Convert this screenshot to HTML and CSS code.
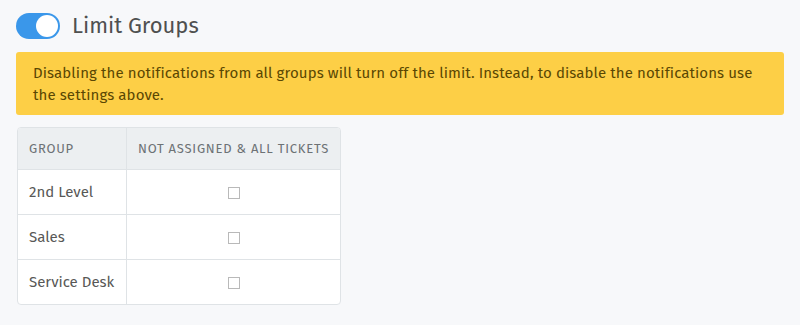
FILE: index.html
```html
<!DOCTYPE html>
<html>
<head>
<meta charset="utf-8">
<link rel="stylesheet" href="styles.css">
</head>
<body>
<div class="page">
  <div class="heading">
    <span class="toggle"><span class="knob"></span></span>
    <h2 class="title">Limit Groups</h2>
  </div>
  <div class="alert">Disabling the notifications from all groups will turn off the limit. Instead, to disable the notifications use the settings above.</div>
  <table class="groups">
    <thead>
      <tr><th class="col-group">Group</th><th class="col-check">Not Assigned &amp; All Tickets</th></tr>
    </thead>
    <tbody>
      <tr><td>2nd Level</td><td class="center"><span class="checkbox"></span></td></tr>
      <tr><td>Sales</td><td class="center"><span class="checkbox"></span></td></tr>
      <tr><td>Service Desk</td><td class="center"><span class="checkbox"></span></td></tr>
    </tbody>
  </table>
</div>
</body>
</html>
```

FILE: styles.css
```css
html, body {
  margin: 0;
  padding: 0;
  background: #f7f8fa;
}
body {
  font-family: "Fira Sans", "Open Sans", "Noto Sans", sans-serif;
  color: #585856;
}
.page {
  padding: 13px 16px 0 16px;
}
.heading {
  display: flex;
  align-items: center;
  gap: 12px;
  height: 26px;
}
.toggle {
  position: relative;
  display: block;
  width: 44px;
  height: 26px;
  border-radius: 13px;
  background: #3a97ea;
  box-sizing: border-box;
}
.knob {
  position: absolute;
  right: 2px;
  top: 2px;
  width: 22px;
  height: 22px;
  border-radius: 50%;
  background: #fff;
}
.title {
  margin: 0;
  font-size: 22px;
  font-weight: 400;
  color: #4f5050;
  line-height: 26px;
}
.alert {
  margin-top: 13px;
  background: #fdcf46;
  border-radius: 3px;
  padding: 10px 17px 9px;
  font-size: 15px;
  letter-spacing: 0.1px;
  line-height: 22px;
  color: #5a4703;
}
.groups {
  margin-top: 12px;
  margin-left: 1px;
  border-collapse: separate;
  border-spacing: 0;
  border: 1px solid #dfe3e6;
  border-radius: 4px;
  background: #fff;
  overflow: hidden;
}
.groups th {
  background: #eceff1;
  font-size: 13px;
  font-weight: 400;
  text-transform: uppercase;
  letter-spacing: 0.75px;
  color: #6d7275;
  text-align: left;
  height: 41px;
  padding: 0 11px;
  border-bottom: 1px solid #dfe3e6;
}
.groups th + th, .groups td + td {
  border-left: 1px solid #dfe3e6;
}
.col-group { width: 86px; }
.groups td {
  font-size: 15px;
  color: #585856;
  height: 44px;
  padding: 0 11px;
}
.groups tbody tr + tr td {
  border-top: 1px solid #dfe3e6;
}
.center { text-align: center; }
.checkbox {
  display: inline-block;
  width: 12px;
  height: 12px;
  border: 1px solid #b9b9b9;
  vertical-align: middle;
  box-sizing: border-box;
}
```
